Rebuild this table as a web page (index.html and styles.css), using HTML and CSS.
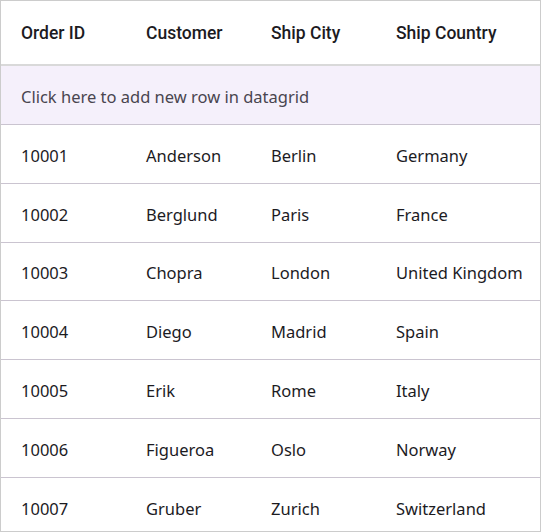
FILE: index.html
```html
<!DOCTYPE html>
<html lang="en">
<head>
    <meta charset="UTF-8">
    <title>Orders grid</title>
    <link rel="stylesheet" href="styles.css">
</head>
<body>

<div class="grid">
    <div class="row header">
        <div class="cell">Order ID</div>
        <div class="cell">Customer</div>
        <div class="cell">Ship City</div>
        <div class="cell">Ship Country</div>
    </div>
    <div class="row add-row">
        <div class="cell">Click here to add new row in datagrid</div>
    </div>
    <div class="row">
        <div class="cell">10001</div>
        <div class="cell">Anderson</div>
        <div class="cell">Berlin</div>
        <div class="cell">Germany</div>
    </div>
    <div class="row">
        <div class="cell">10002</div>
        <div class="cell">Berglund</div>
        <div class="cell">Paris</div>
        <div class="cell">France</div>
    </div>
    <div class="row">
        <div class="cell">10003</div>
        <div class="cell">Chopra</div>
        <div class="cell">London</div>
        <div class="cell">United Kingdom</div>
    </div>
    <div class="row">
        <div class="cell">10004</div>
        <div class="cell">Diego</div>
        <div class="cell">Madrid</div>
        <div class="cell">Spain</div>
    </div>
    <div class="row">
        <div class="cell">10005</div>
        <div class="cell">Erik</div>
        <div class="cell">Rome</div>
        <div class="cell">Italy</div>
    </div>
    <div class="row">
        <div class="cell">10006</div>
        <div class="cell">Figueroa</div>
        <div class="cell">Oslo</div>
        <div class="cell">Norway</div>
    </div>
    <div class="row">
        <div class="cell">10007</div>
        <div class="cell">Gruber</div>
        <div class="cell">Zurich</div>
        <div class="cell">Switzerland</div>
    </div>
</div>

</body>
</html>
```

FILE: styles.css
```css
body {
    margin: 0;
    background-color: #fff;
    font-family: "Noto Sans", sans-serif;
    color: #1c1b1f;
}

.grid {
    width: 541px;
    height: 532px;
    box-sizing: border-box;
    border: 1px solid #cccccc;
    overflow: hidden;
}

.row {
    display: grid;
    grid-template-columns: 125px 125px 125px 1fr;
    height: 58.8px;
    box-sizing: border-box;
    border-bottom: 1px solid #cac4d0;
    align-items: center;
    font-size: 16.5px;
}

.cell {
    padding: 3px 0 0 20px;
    white-space: nowrap;
}

.header {
    height: 65px;
    border-bottom: 2px solid #d9d9d9;
    font-family: Roboto, sans-serif;
    font-size: 17.5px;
    font-weight: 500;
    color: #1c1b1f;
}

.header .cell {
    padding-top: 0;
}

.add-row {
    display: flex;
    height: 59px;
    background-color: #f5f0fb;
    color: #49454f;
}
```
